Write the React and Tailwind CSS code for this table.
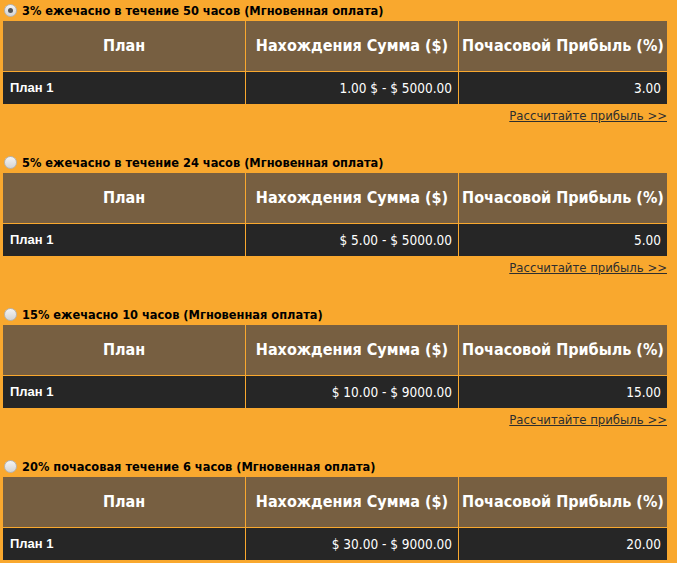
import React from 'react';

const plans = [
  { title: '3% ежечасно в течение 50 часов (Мгновенная оплата)', range: '1.00 $ - $ 5000.00', profit: '3.00', checked: true },
  { title: '5% ежечасно в течение 24 часов (Мгновенная оплата)', range: '$ 5.00 - $ 5000.00', profit: '5.00' },
  { title: '15% ежечасно 10 часов (Мгновенная оплата)', range: '$ 10.00 - $ 9000.00', profit: '15.00' },
  { title: '20% почасовая течение 6 часов (Мгновенная оплата)', range: '$ 30.00 - $ 9000.00', profit: '20.00', last: true },
];

const Radio = ({ checked }) => (
  <span className="relative inline-block w-[13px] h-[13px] rounded-full border border-[#b5b5b5] bg-gradient-to-b from-[#f4f4f4] to-[#d4d4d4] shrink-0">
    {checked && <span className="absolute left-[3px] top-[3px] w-[5px] h-[5px] rounded-full bg-[#555]" />}
  </span>
);

const head = "h-[50px] bg-[#775f41] flex items-center justify-center text-white font-bold text-[16px] font-['DejaVu_Sans_Condensed',sans-serif] whitespace-nowrap";
const cell = "h-[32px] bg-[#262626] flex items-center justify-end pr-[6px] text-white text-[13.5px] font-['DejaVu_Sans_Condensed',sans-serif]";

const PlanBlock = ({ plan }) => (
  <div className="mb-[28px]">
    <div className="h-[21px] flex items-center gap-[5px] pl-[4px] text-[12.7px] font-bold text-black font-['DejaVu_Sans_Condensed',sans-serif] whitespace-nowrap">
      <Radio checked={plan.checked} />
      <span>{plan.title}</span>
    </div>
    <div className="ml-[3px] w-[664px] grid grid-cols-[242px_212px_1fr] gap-px bg-[#f9a82e]">
      <div className={head}>План</div>
      <div className={head}>Нахождения Сумма ($)</div>
      <div className={head}>Почасовой Прибыль (%)</div>
      <div className="h-[32px] bg-[#262626] flex items-center pl-[7px] text-white font-bold text-[13px] font-['Liberation_Sans',sans-serif]">План 1</div>
      <div className={cell}>{plan.range}</div>
      <div className={cell}>{plan.profit}</div>
    </div>
    {!plan.last && (
      <div className="h-[20px] pt-[3px] w-[667px] flex items-center justify-end text-[13px] text-[#2e2e2e] font-['DejaVu_Sans_Condensed',sans-serif]">
        <a href="#" className="underline">Рассчитайте прибыль &gt;&gt;</a>
      </div>
    )}
  </div>
);

export default function App() {
  return (
    <div className="w-[677px] h-[563px] overflow-hidden bg-[#f9a82e]">
      {plans.map((p, i) => (
        <PlanBlock key={i} plan={p} />
      ))}
    </div>
  );
}
